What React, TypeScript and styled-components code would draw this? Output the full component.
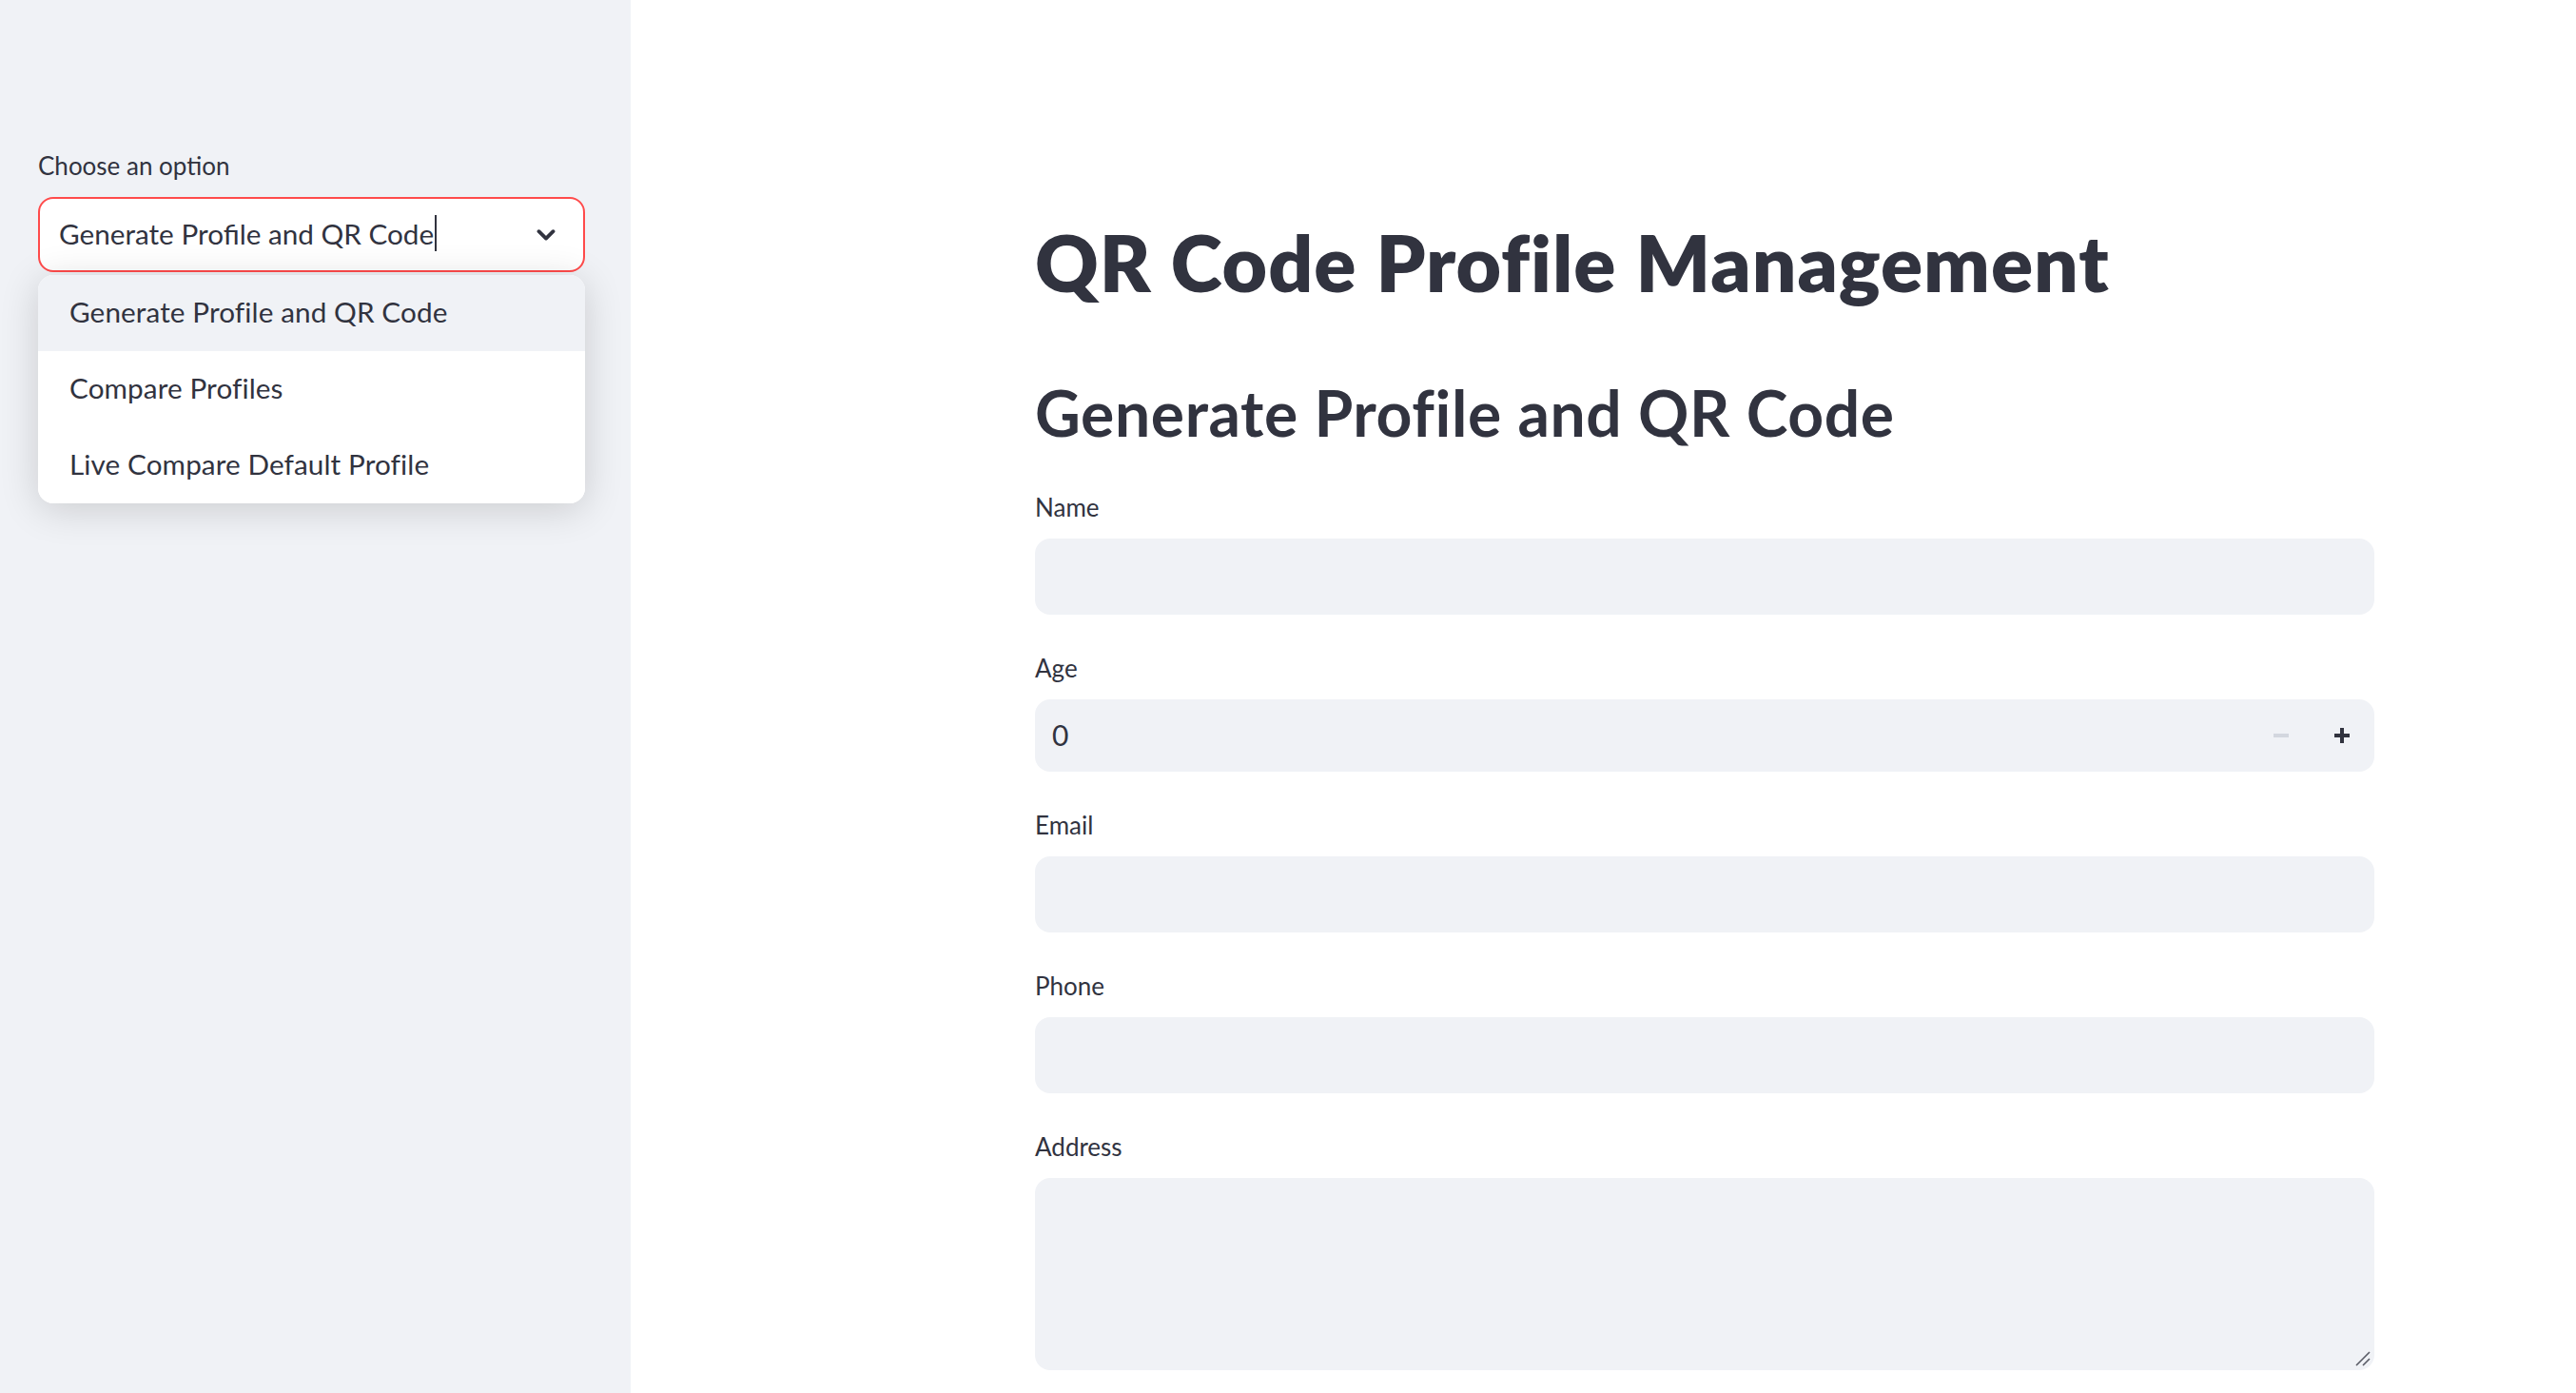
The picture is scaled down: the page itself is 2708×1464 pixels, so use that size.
import React from "react";
import styled, { createGlobalStyle } from "styled-components";

const GlobalStyle = createGlobalStyle`
  html, body { margin: 0; padding: 0; background: #ffffff; }
  body {
    font-family: Lato, "Noto Sans", "Liberation Sans", sans-serif;
    color: #31333f;
    -webkit-font-smoothing: antialiased;
  }
  *, *::before, *::after { box-sizing: border-box; }
`;

const Page = styled.div`
  display: flex;
  width: 2708px;
  height: 1464px;
  overflow: hidden;
  background: #ffffff;
`;

const Sidebar = styled.aside`
  flex: 0 0 663px;
  background: #f0f2f6;
  padding: 156px 48px 0 40px;
`;

const FieldLabel = styled.label`
  display: block;
  font-size: 26px;
  line-height: 37px;
  padding-bottom: 3px;
  margin-bottom: 11px;
  color: #31333f;
`;

const SelectWrap = styled.div`
  position: relative;
`;

const SelectBox = styled.div`
  height: 79px;
  border: 2px solid #ff4b4b;
  border-radius: 16px;
  background: #ffffff;
  display: flex;
  align-items: center;
  justify-content: space-between;
  padding: 0 29px 3px 20px;
`;

const SelectValue = styled.span`
  display: flex;
  align-items: center;
  font-size: 29.7px;
  color: #31333f;
`;

const Caret = styled.span`
  display: inline-block;
  width: 2px;
  height: 38px;
  margin-left: 1px;
  background: #31333f;
`;

const ChevronSlot = styled.span`
  display: flex;
  padding-top: 3px;
`;

const Menu = styled.ul`
  position: absolute;
  top: calc(100% + 3px);
  left: 0;
  right: 0;
  margin: 0;
  padding: 0;
  list-style: none;
  background: #ffffff;
  border-radius: 16px;
  overflow: hidden;
  box-shadow: 0 6px 40px rgba(0, 0, 0, 0.16);
  z-index: 2;
`;

const MenuItem = styled.li<{ $active?: boolean }>`
  height: 80px;
  display: flex;
  align-items: center;
  padding: 0 0 4px 33px;
  font-size: 29.7px;
  letter-spacing: 0.1px;
  color: #31333f;
  background: ${(p) => (p.$active ? "#f0f2f6" : "#ffffff")};
`;

const Main = styled.main`
  flex: 1;
  padding: 226px 0 0 425px;
`;

const Content = styled.div`
  width: 1408px;
`;

const Title = styled.h1`
  margin: 0 0 70px;
  font-size: 82px;
  line-height: 1.2;
  font-weight: 800;
  letter-spacing: 1px;
  color: #31333f;
`;

const Subtitle = styled.h2`
  margin: 0 0 41px;
  font-size: 66px;
  line-height: 80px;
  font-weight: 700;
  letter-spacing: 0.6px;
  color: #31333f;
`;

const Form = styled.div`
  display: flex;
  flex-direction: column;
  gap: 38px;
`;

const Field = styled.div`
  display: flex;
  flex-direction: column;
`;

const TextInput = styled.input`
  display: block;
  width: 100%;
  height: 80px;
  border: none;
  border-radius: 16px;
  background: #f0f2f6;
  padding: 0 18px;
  font-family: inherit;
  font-size: 30px;
  color: #31333f;
  outline: none;
`;

const NumberBox = styled.div`
  display: flex;
  align-items: center;
  height: 76px;
  border-radius: 16px;
  background: #f0f2f6;
  overflow: hidden;
  padding-right: 2px;
`;

const NumberInput = styled.input`
  flex: 1;
  height: 100%;
  border: none;
  background: transparent;
  padding: 0 18px 2px;
  font-family: inherit;
  font-size: 30px;
  color: #31333f;
  outline: none;
`;

const StepButton = styled.button`
  flex: 0 0 64px;
  height: 100%;
  border: none;
  background: transparent;
  padding: 0;
  display: flex;
  align-items: center;
  justify-content: center;
`;

const AreaWrap = styled.div`
  position: relative;
`;

const TextArea = styled.textarea`
  display: block;
  width: 100%;
  height: 202px;
  border: none;
  border-radius: 16px;
  background: #f0f2f6;
  padding: 16px 18px;
  font-family: inherit;
  font-size: 30px;
  color: #31333f;
  resize: none;
  outline: none;
`;

const Grip = styled.svg`
  position: absolute;
  right: 3px;
  bottom: 3px;
  pointer-events: none;
`;

const Chevron = () => (
  <svg width="20" height="12" viewBox="0 0 20 12" aria-hidden>
    <path
      d="M2.5 2.2 L10 9.6 L17.5 2.2"
      fill="none"
      stroke="#31333f"
      strokeWidth="3.8"
      strokeLinecap="round"
      strokeLinejoin="round"
    />
  </svg>
);

const MinusIcon = () => (
  <svg width="16" height="16" viewBox="0 0 16 16" aria-hidden>
    <rect x="0" y="6" width="16" height="4" fill="#d3d7df" />
  </svg>
);

const PlusIcon = () => (
  <svg width="16" height="16" viewBox="0 0 16 16" aria-hidden>
    <rect x="0" y="6" width="16" height="4" fill="#31333f" />
    <rect x="6" y="0" width="4" height="16" fill="#31333f" />
  </svg>
);

const options = [
  "Generate Profile and QR Code",
  "Compare Profiles",
  "Live Compare Default Profile",
];

export default function App() {
  return (
    <>
      <GlobalStyle />
      <Page>
        <Sidebar>
          <FieldLabel>Choose an option</FieldLabel>
          <SelectWrap>
            <SelectBox>
              <SelectValue>
                Generate Profile and QR Code
                <Caret />
              </SelectValue>
              <ChevronSlot>
                <Chevron />
              </ChevronSlot>
            </SelectBox>
            <Menu>
              {options.map((o, i) => (
                <MenuItem key={o} $active={i === 0}>
                  {o}
                </MenuItem>
              ))}
            </Menu>
          </SelectWrap>
        </Sidebar>
        <Main>
          <Content>
            <Title>QR Code Profile Management</Title>
            <Subtitle>Generate Profile and QR Code</Subtitle>
            <Form>
              <Field>
                <FieldLabel>Name</FieldLabel>
                <TextInput defaultValue="" />
              </Field>
              <Field>
                <FieldLabel>Age</FieldLabel>
                <NumberBox>
                  <NumberInput defaultValue="0" />
                  <StepButton>
                    <MinusIcon />
                  </StepButton>
                  <StepButton>
                    <PlusIcon />
                  </StepButton>
                </NumberBox>
              </Field>
              <Field>
                <FieldLabel>Email</FieldLabel>
                <TextInput defaultValue="" />
              </Field>
              <Field>
                <FieldLabel>Phone</FieldLabel>
                <TextInput defaultValue="" />
              </Field>
              <Field>
                <FieldLabel>Address</FieldLabel>
                <AreaWrap>
                  <TextArea defaultValue="" />
                  <Grip width="18" height="18" viewBox="0 0 18 18" aria-hidden>
                    <path d="M2 16 L16 2 M9 16 L16 9" stroke="#5a5c66" strokeWidth="1.6" fill="none" />
                  </Grip>
                </AreaWrap>
              </Field>
            </Form>
          </Content>
        </Main>
      </Page>
    </>
  );
}
